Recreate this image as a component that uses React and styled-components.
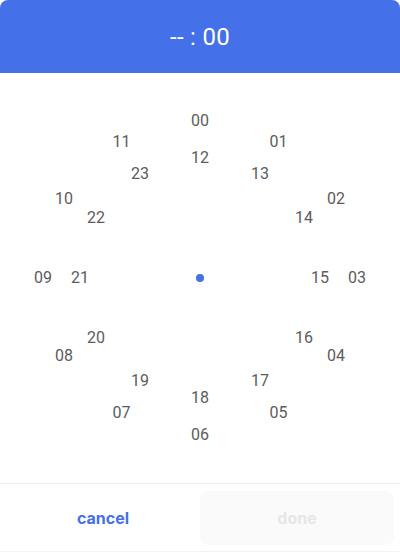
import React from "react";
import styled, { createGlobalStyle } from "styled-components";

const Global = createGlobalStyle`
  html, body { margin: 0; padding: 0; background: #fff; }
  body { font-family: Roboto, "Liberation Sans", sans-serif; }
`;

const Card = styled.div`
  width: 400px;
  height: 552px;
  display: flex;
  flex-direction: column;
  background: #fff;
  border-radius: 8px 8px 0 0;
  overflow: hidden;
  box-sizing: border-box;
  border-bottom: 1px solid #f3f3f3;
`;

const Header = styled.div`
  height: 73px;
  flex: none;
  background: #4470e8;
  display: flex;
  align-items: center;
  justify-content: center;
  color: #fff;
  font-size: 24px;
  letter-spacing: 0.3px;
`;

const Body = styled.div`
  flex: 1;
  display: flex;
  align-items: center;
  justify-content: center;
`;

const Face = styled.div`
  position: relative;
  width: 360px;
  height: 360px;
  margin-top: -1px;
`;

const Num = styled.span`
  position: absolute;
  transform: translate(-50%, -50%);
  font-size: 16px;
  color: #5c5c5c;
  line-height: 1;
`;

const Dot = styled.span`
  position: absolute;
  left: 180px;
  top: 180px;
  width: 8px;
  height: 8px;
  border-radius: 50%;
  background: #4470e8;
  transform: translate(-50%, -50%);
`;

const Footer = styled.div`
  flex: none;
  border-top: 1px solid #efefef;
  padding: 7px 6px 7px 6px;
  display: grid;
  grid-template-columns: 1fr 1fr;
  height: 68px;
  box-sizing: border-box;
`;

const Btn = styled.button`
  border: none;
  border-radius: 8px;
  background: ${(p) => (p.$disabled ? "#fafafa" : "transparent")};
  color: ${(p) => (p.$disabled ? "#e6e6e6" : "#4470e8")};
  font-family: Inter, "Liberation Sans", sans-serif;
  font-weight: 700;
  font-size: 16px;
  height: 54px;
  cursor: pointer;
`;

const pad = (n) => String(n).padStart(2, "0");

export default function App() {
  const nums = [];
  for (let h = 0; h < 12; h++) {
    const a = (h * 30 * Math.PI) / 180;
    nums.push({ v: pad(h), x: 180 + 157 * Math.sin(a), y: 180 - 157 * Math.cos(a) });
    nums.push({ v: pad(h + 12), x: 180 + 120 * Math.sin(a), y: 180 - 120 * Math.cos(a) });
  }
  return (
    <>
      <Global />
      <Card>
        <Header>-- : 00</Header>
        <Body>
          <Face>
            {nums.map((n) => (
              <Num key={n.v} style={{ left: n.x, top: n.y }}>
                {n.v}
              </Num>
            ))}
            <Dot />
          </Face>
        </Body>
        <Footer>
          <Btn>cancel</Btn>
          <Btn $disabled>done</Btn>
        </Footer>
      </Card>
    </>
  );
}
